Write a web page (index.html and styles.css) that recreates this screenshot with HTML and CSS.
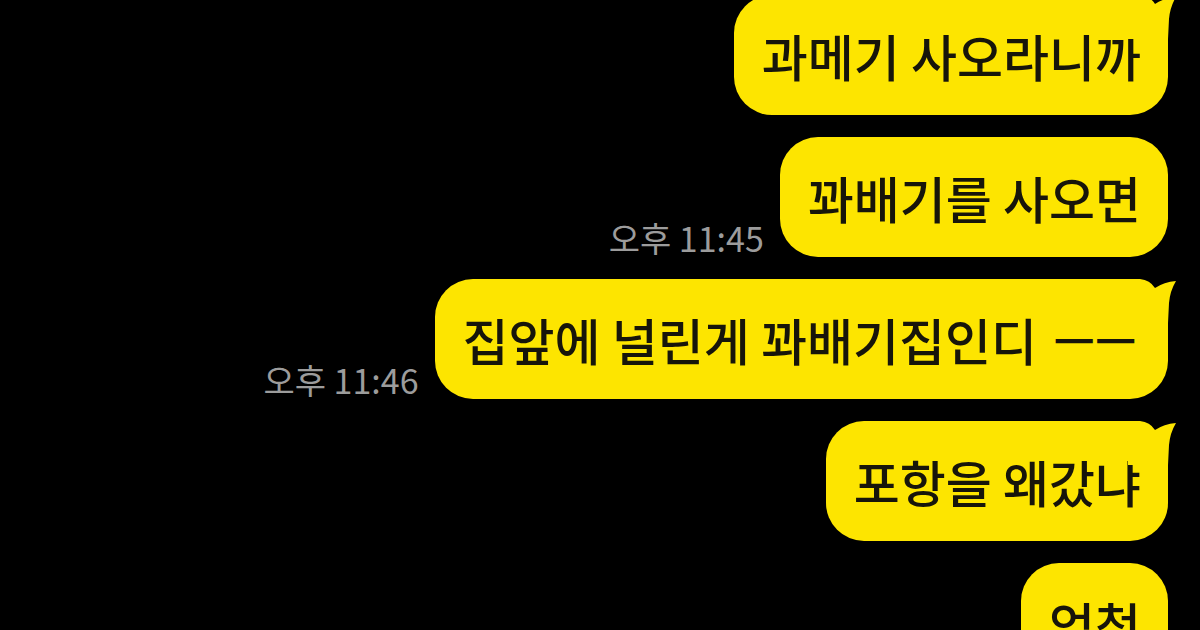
FILE: index.html
```html
<!doctype html>
<html>
<head>
	<meta charset='utf-8'>
	<title>채팅</title>
	<link rel="stylesheet" href="styles.css">
</head>
<body>
<div class='chat' id='chat'>
	<div class='msg-row'>
		<div class='bubble bubble-tail'>과메기 사오라니까<svg class='tail' viewBox='0 0 50 50'><path d='M0,0 H12 Q22,1 27,9 Q36,3 48,2 Q42,12 41,24 L40,44 H0 Z'/></svg></div>
	</div>
	<div class='msg-row'>
		<span class='msg-time'>오후 11:45</span>
		<div class='bubble'>꽈배기를 사오면</div>
	</div>
	<div class='msg-row'>
		<span class='msg-time'>오후 11:46</span>
		<div class='bubble bubble-tail'>집앞에 널린게 꽈배기집인디 <span class='dash'>ㅡㅡ</span><svg class='tail' viewBox='0 0 50 50'><path d='M0,0 H12 Q22,1 27,9 Q36,3 48,2 Q42,12 41,24 L40,44 H0 Z'/></svg></div>
	</div>
	<div class='msg-row'>
		<div class='bubble bubble-tail'>포항을 왜갔냐<svg class='tail' viewBox='0 0 50 50'><path d='M0,0 H12 Q22,1 27,9 Q36,3 48,2 Q42,12 41,24 L40,44 H0 Z'/></svg></div>
	</div>
	<div class='msg-row'>
		<div class='bubble'>엄청</div>
	</div>
</div>
</body>
</html>
```

FILE: styles.css
```css
*{margin:0;padding:0;}
html,body{background:#000;}
body{width:1200px;height:630px;overflow:hidden;font-family:"Noto Sans CJK KR","Noto Sans",sans-serif;}

.chat{display:flex;flex-direction:column;align-items:flex-end;gap:22px;padding-right:32px;margin-top:-5px;}
.msg-row{display:flex;align-items:flex-end;gap:16px;}

.bubble{position:relative;display:flex;align-items:center;height:120px;padding:0 27px 0 28px;background:#fde500;border-radius:38px;color:#17150a;font-size:50px;font-weight:500;line-height:1;white-space:nowrap;}
.bubble .dash{margin-left:12px;transform:scaleX(0.9);}
.tail{position:absolute;top:0;right:-10px;width:50px;height:50px;fill:#fde500;}

.msg-time{color:#9c9c9c;font-size:34px;line-height:1;margin-bottom:2px;white-space:nowrap;}
```
